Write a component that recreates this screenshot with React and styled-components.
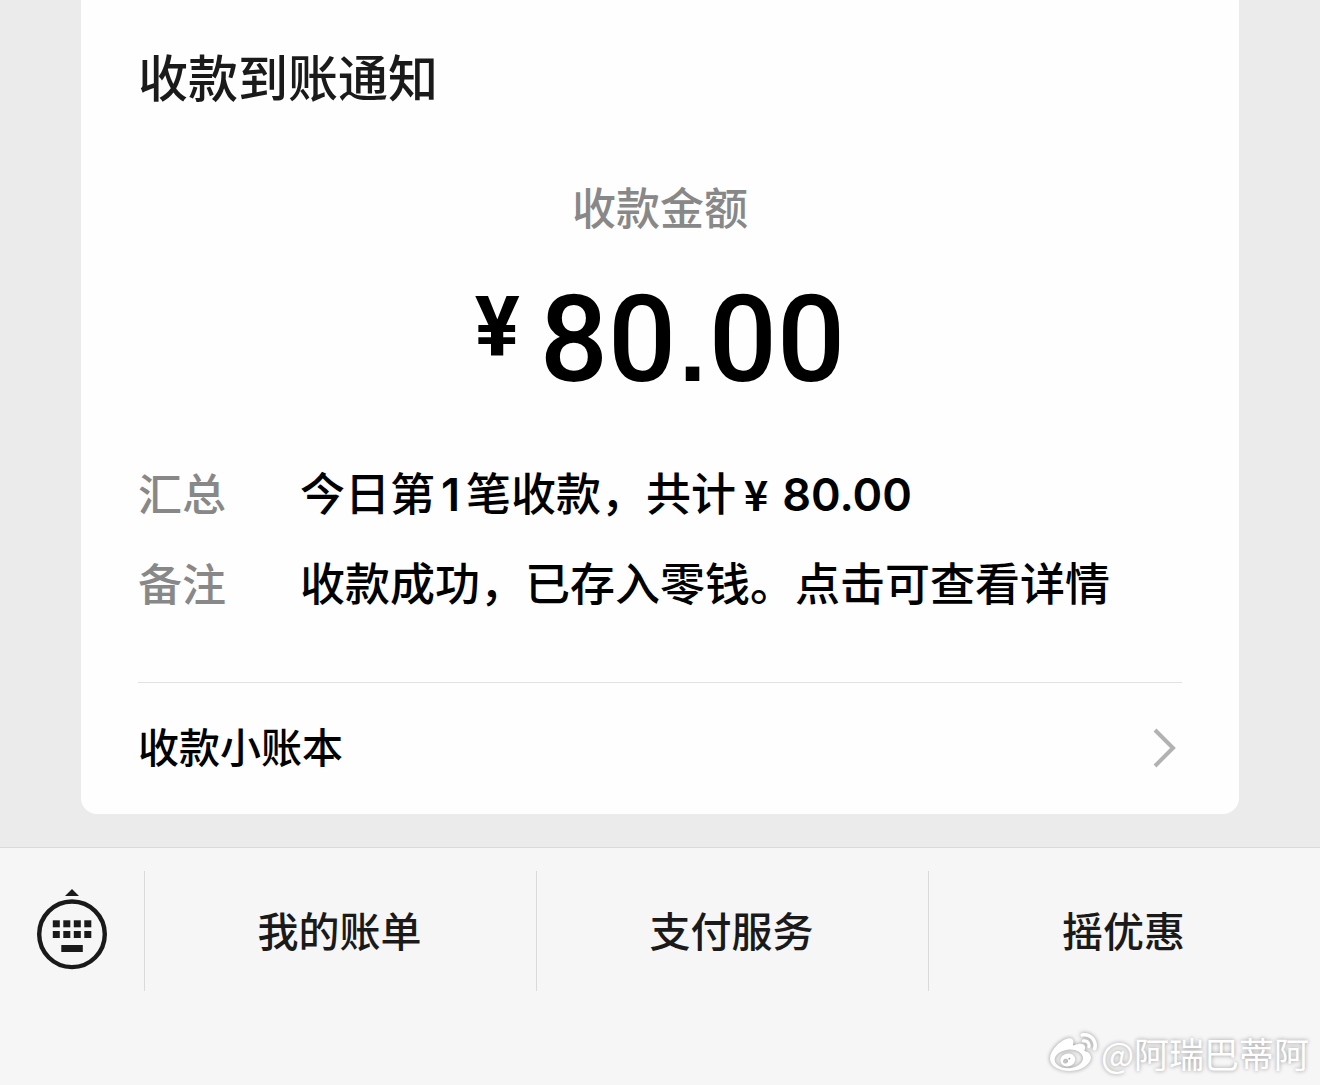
import React from "react";
import styled, { createGlobalStyle } from "styled-components";
import { FaWeibo } from "react-icons/fa";


const menu = ["我的账单", "支付服务", "摇优惠"];


const App = () => {

    return (
        <>
            <GlobalStyle />
            <Page>
                <Chat>
                    <Card>
                        <Title>收款到账通知</Title>
                        <Caption>收款金额</Caption>
                        <Amount>
                            <Currency>¥</Currency>
                            <span>80<Point>.</Point>00</span>
                        </Amount>
                        <Details>
                            <Row>
                                <Label>汇总</Label>
                                <Value>今日第<Count>1</Count>笔收款，共计<Yen>¥</Yen><Digits>80.00</Digits></Value>
                            </Row>
                            <Row>
                                <Label>备注</Label>
                                <Value>收款成功，已存入零钱。点击可查看详情</Value>
                            </Row>
                        </Details>
                        <Ledger href="#ledger">
                            收款小账本
                            <Chevron />
                        </Ledger>
                    </Card>
                </Chat>
                <Footer>
                    <KeyboardButton type="button" aria-label="键盘">
                        <KeyboardIcon />
                    </KeyboardButton>
                    {menu.map((name) => (
                        <MenuButton type="button" key={name}>{name}</MenuButton>
                    ))}
                </Footer>
                <Watermark>
                    <FaWeibo size={47} />
                    <span>@阿瑞巴蒂阿</span>
                </Watermark>
            </Page>
        </>
    );

}

const Chevron = () => (
    <svg width="24" height="40" viewBox="0 0 24 40" fill="none" aria-hidden="true">
        <path d="M2 2L20 20L2 38" stroke="#b2b2b2" strokeWidth="4" />
    </svg>
)

const KeyboardIcon = () => (
    <svg width="70" height="82" viewBox="0 0 70 82" fill="#1a1a1a" aria-hidden="true">
        <path d="M35 1L42 8H28Z" />
        <circle cx="35" cy="46.3" r="32.8" fill="none" stroke="#1a1a1a" strokeWidth="4.4" />
        {[15.8, 26.3, 36.8, 47.3].map((x) => (
            <React.Fragment key={x}>
                <rect x={x} y="32.3" width="7" height="7" />
                <rect x={x} y="43" width="7" height="7" />
            </React.Fragment>
        ))}
        <rect x="24.3" y="57" width="21.5" height="7" />
    </svg>
)


const GlobalStyle = createGlobalStyle`
    * {
        box-sizing: border-box;
    }

    body {
        margin: 0;
        background-color: #f6f6f6;
        font-family: Inter, "Noto Sans CJK SC", sans-serif;
        font-weight: 500;
        color: #000;
    }
`

const Page = styled.div`
    position: relative;
    display: flex;
    flex-direction: column;
    min-height: 100vh;
`

const Chat = styled.main`
    padding: 0 81px 33px;
    background-color: #ebebeb;
`

const Card = styled.section`
    padding: 49px 57px 0;
    background-color: #fefefe;
    border-radius: 0 0 16px 16px;
`

const Title = styled.h1`
    margin: 0;
    font-size: 50px;
    font-weight: 500;
    line-height: 60px;
    color: #1a1a1a;
`

const Caption = styled.p`
    margin: 75px 0 46px;
    font-size: 44px;
    line-height: 50px;
    text-align: center;
    color: #888;
`

const Amount = styled.div`
    display: flex;
    justify-content: center;
    gap: 20px;
    font-family: Roboto, sans-serif;
    font-size: 120px;
    line-height: 120px;
`

const Currency = styled.span`
    font-size: 84px;
    font-weight: 700;
    line-height: 96px;
`

const Point = styled.span`
    padding: 0 3px;
    font-family: "Liberation Sans", sans-serif;
    font-size: 96px;
    font-weight: 700;
    line-height: 1;
`

const Details = styled.dl`
    margin: 50px 0 52px;
`

const Row = styled.div`
    display: flex;
    line-height: 90px;
`

const Label = styled.dt`
    width: 162px;
    font-size: 44px;
    color: #888;
`

const Value = styled.dd`
    margin: 0;
    font-size: 45px;
`

const Digits = styled.span`
    font-weight: 600;
`

const Count = styled(Digits)`
    padding: 0 6px;
`

const Yen = styled.span`
    padding: 0 14px 0 8px;
    font-family: "Noto Sans CJK SC", sans-serif;
    font-size: 41px;
    font-weight: 700;
    line-height: 1;
`

const Ledger = styled.a`
    display: flex;
    justify-content: space-between;
    align-items: center;
    height: 132px;
    padding: 0 5px 2px 0;
    border-top: 1px solid #e2e2e2;
    font-size: 41px;
    line-height: 60px;
    color: inherit;
    text-decoration: none;
`

const Footer = styled.nav`
    display: flex;
    flex: 1;
    align-items: flex-start;
    padding-top: 23px;
    background-color: #f6f6f6;
    border-top: 1px solid #dadada;
`

const MenuButton = styled.button`
    flex: 1;
    height: 120px;
    padding: 2px 2px 0 0;
    border: 0;
    border-left: 1px solid #dadada;
    background: none;
    font: inherit;
    font-size: 41px;
    line-height: 60px;
    color: #1a1a1a;
    cursor: pointer;
`

const KeyboardButton = styled(MenuButton)`
    display: flex;
    flex: none;
    justify-content: center;
    align-items: center;
    width: 144px;
    padding: 0 0 4px;
    border-left: 0;
`

const Watermark = styled.div`
    position: absolute;
    right: 11px;
    bottom: 7px;
    display: flex;
    align-items: center;
    gap: 4px;
    font-family: "Noto Sans CJK SC", sans-serif;
    font-size: 35px;
    font-weight: 400;
    line-height: 50px;
    color: #fff;
    text-shadow: 0 0 4px rgba(0, 0, 0, 0.4);

    & svg {
        filter: drop-shadow(0 0 2px rgba(0, 0, 0, 0.4));
    }
`


export default App;
